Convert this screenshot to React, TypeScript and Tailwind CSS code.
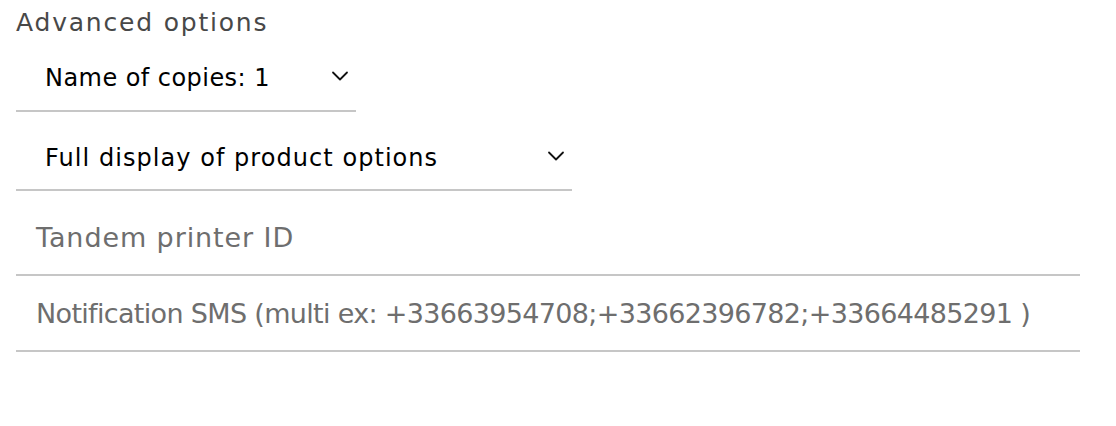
import React from 'react';

const Chevron = () => (
  <svg className="w-[18px] h-[10px] flex-shrink-0" viewBox="0 0 18 10" fill="none" stroke="#111" strokeWidth={1.8} strokeLinecap="round" strokeLinejoin="round">
    <path d="M2 1.5l7 7 7-7" />
  </svg>
);

interface SelectProps {
  label: string;
  className: string;
  tracking: string;
}

const SelectField: React.FC<SelectProps> = ({ label, className, tracking }) => (
  <div className={`${className} flex items-center justify-between pl-[29px] pr-[7px] border-b-2 border-[#c6c6c6]`}>
    <span className={`block pt-[4px] text-[24px] leading-none ${tracking} text-black`}>{label}</span>
    <Chevron />
  </div>
);

const InputField: React.FC<{ placeholder: string; className: string; tracking: string }> = ({ placeholder, className, tracking }) => (
  <div className={`${className} w-[1064px] h-[76px] flex items-center pl-[20px] border-b-2 border-[#c6c6c6]`}>
    <span className={`text-[27px] leading-none ${tracking} text-[#6e6e6e] whitespace-nowrap`}>{placeholder}</span>
  </div>
);

export default function App() {
  return (
    <div className="w-[1116px] h-[426px] bg-white px-4 pt-[6px]" style={{ fontFamily: '"DejaVu Sans", sans-serif' }}>
      <h2 className="text-[25px] leading-[34px] tracking-[1.8px] text-[#484848]">Advanced options</h2>
      <SelectField label="Name of copies: 1" className="w-[340px] h-[70px] mt-[2px]" tracking="tracking-[0.45px]" />
      <SelectField label="Full display of product options" className="w-[556px] h-[68px] mt-[11px]" tracking="tracking-[1.05px]" />
      <InputField placeholder="Tandem printer ID" className="mt-[9px]" tracking="tracking-[0.9px]" />
      <InputField placeholder="Notification SMS (multi ex: +33663954708;+33662396782;+33664485291 )" className="" tracking="tracking-[-0.67px]" />
    </div>
  );
}
